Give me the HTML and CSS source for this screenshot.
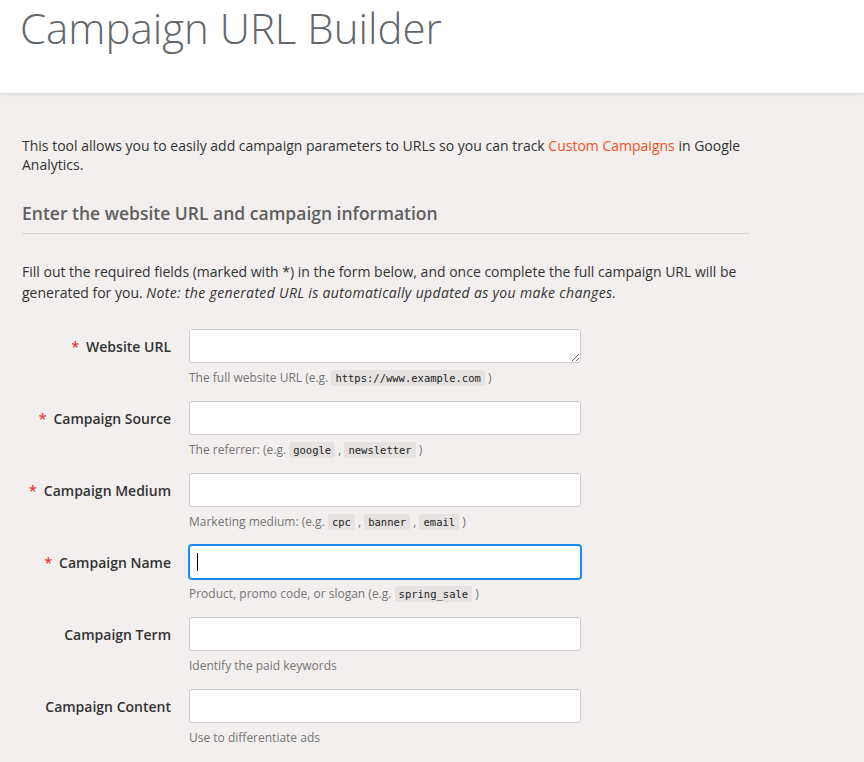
FILE: index.html
```html
<!DOCTYPE html>
<html lang="en">
<head>
<meta charset="utf-8">
<title>Campaign URL Builder</title>
<link rel="stylesheet" href="styles.css">
</head>
<body>
<header class="top">
  <h1 class="title">Campaign URL Builder</h1>
</header>
<main class="content">
  <p class="intro">This tool allows you to easily add campaign parameters to URLs so you can track <a class="link" href="#">Custom Campaigns</a> in Google Analytics.</p>
  <h2 class="section-title">Enter the website URL and campaign information</h2>
  <p class="instructions">Fill out the required fields (marked with *) in the form below, and once complete the full campaign URL will be generated for you. <em class="note">Note: the generated URL is automatically updated as you make changes.</em></p>
  <form class="form">
    <div class="row">
      <label class="label"><span class="req">*</span>Website URL</label>
      <div class="field">
        <textarea class="input textarea" rows="1"></textarea>
        <div class="help">The full website URL (e.g. <code class="chip">https://www.example.com</code> )</div>
      </div>
    </div>
    <div class="row">
      <label class="label"><span class="req">*</span>Campaign Source</label>
      <div class="field">
        <input class="input" type="text">
        <div class="help">The referrer: (e.g. <code class="chip">google</code> , <code class="chip">newsletter</code> )</div>
      </div>
    </div>
    <div class="row">
      <label class="label"><span class="req">*</span>Campaign Medium</label>
      <div class="field">
        <input class="input" type="text">
        <div class="help">Marketing medium: (e.g. <code class="chip">cpc</code> , <code class="chip">banner</code> , <code class="chip">email</code> )</div>
      </div>
    </div>
    <div class="row">
      <label class="label"><span class="req">*</span>Campaign Name</label>
      <div class="field">
        <div class="input focused"><span class="caret"></span></div>
        <div class="help">Product, promo code, or slogan (e.g. <code class="chip">spring_sale</code> )</div>
      </div>
    </div>
    <div class="row">
      <label class="label">Campaign Term</label>
      <div class="field">
        <input class="input" type="text">
        <div class="help">Identify the paid keywords</div>
      </div>
    </div>
    <div class="row">
      <label class="label">Campaign Content</label>
      <div class="field">
        <input class="input" type="text">
        <div class="help">Use to differentiate ads</div>
      </div>
    </div>
  </form>
</main>
</body>
</html>
```
FILE: styles.css
```css
html, body {
  margin: 0;
  padding: 0;
}
body {
  background: #f2efee;
  font-family: "Open Sans", "Noto Sans", sans-serif;
  color: #333;
  overflow: hidden;
}
.top {
  background: #fff;
  height: 93px;
  box-shadow: 0 1px 4px rgba(0,0,0,0.12);
  position: relative;
}
.title {
  margin: 0;
  padding: 0 0 0 20px;
  font-weight: 300;
  font-size: 42px;
  line-height: 56px;
  color: #63676b;
}
.content {
  padding: 43px 22px 0 22px;
}
.intro {
  margin: 0;
  width: 727px;
  font-size: 14px;
  line-height: 19px;
  color: #333;
}
.link {
  color: #f4511e;
  text-decoration: none;
}
.section-title {
  width: 727px;
  margin: 27px 0 0 0;
  padding-bottom: 8px;
  font-size: 17.5px;
  line-height: 24px;
  font-weight: 600;
  color: #5f5f5f;
  border-bottom: 1px solid #d6d3d2;
}
.instructions {
  margin: 27px 0 0 0;
  width: 727px;
  font-size: 14px;
  line-height: 21px;
}
.note {
  letter-spacing: 0.35px;
}
.form {
  margin-top: 26px;
  display: flex;
  flex-direction: column;
}
.row {
  display: flex;
  gap: 18px;
  margin-bottom: 13px;
}
.label {
  width: 149px;
  flex: none;
  height: 34px;
  display: flex;
  align-items: center;
  justify-content: flex-end;
  font-size: 14px;
  font-weight: 600;
  color: #333;
}
.req {
  color: #e53935;
  margin-right: 7px;
}
.field {
  display: flex;
  flex-direction: column;
}
.input {
  box-sizing: border-box;
  width: 392px;
  height: 34px;
  margin: 0;
  background: #fff;
  border: 1px solid #ccc;
  border-radius: 3px;
  font: inherit;
  display: block;
  padding: 6px 8px;
}
.textarea {
  resize: vertical;
}
.focused {
  border-color: #1a8cf0;
  box-shadow: 0 0 0 1px #1a8cf0;
  display: flex;
  align-items: center;
}
.caret {
  display: block;
  width: 1px;
  height: 18px;
  background: #000;
  margin-left: -1px;
}
.help {
  margin-top: 5px;
  font-size: 12px;
  line-height: 20px;
  color: #757575;
}
.chip {
  font-family: "DejaVu Sans Mono", "Liberation Mono", monospace;
  font-size: 10.5px;
  color: #222;
  background: #e5e2e1;
  border-radius: 3px;
  padding: 2px 4px;
}
```
